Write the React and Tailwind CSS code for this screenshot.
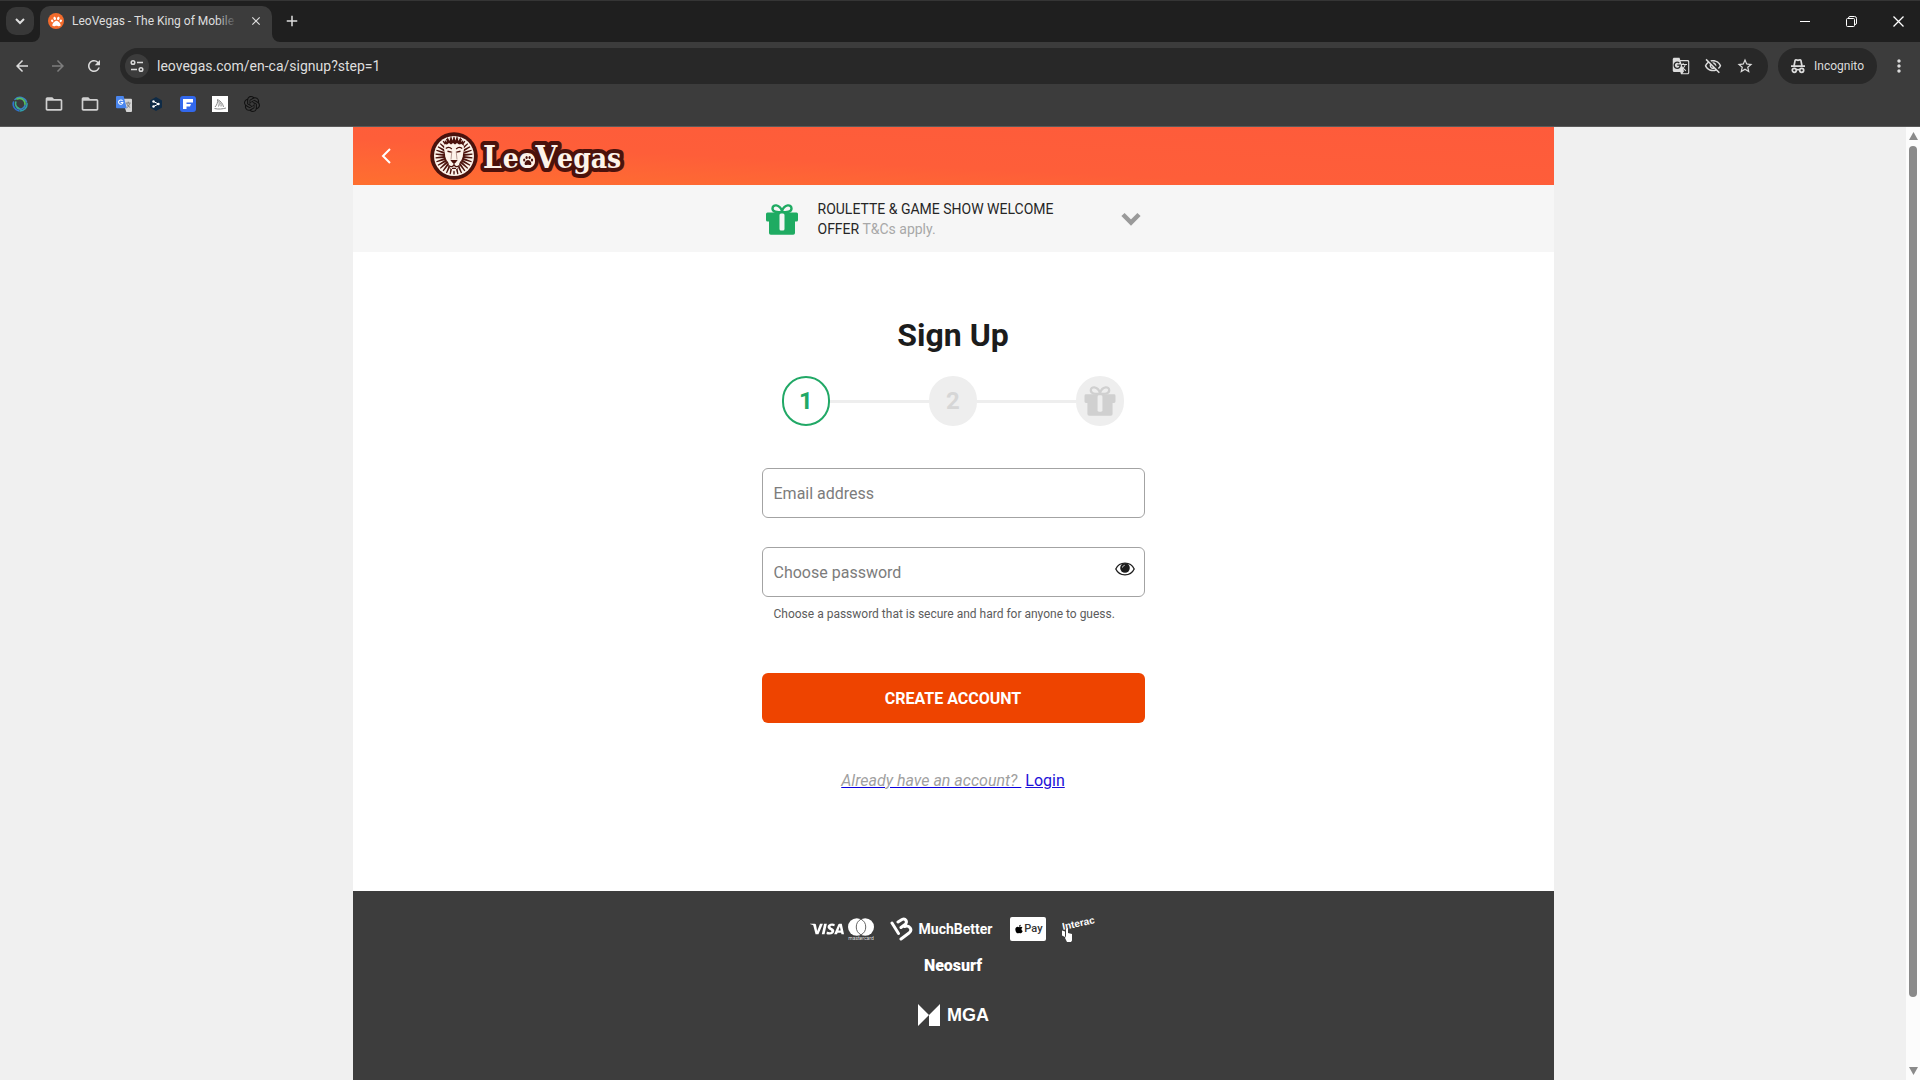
import React, { useState } from 'react';
import {
  MdArrowBack,
  MdArrowForward,
  MdRefresh,
  MdStarBorder,
  MdOutlineVisibilityOff,
  MdMoreVert,
  MdFolderOpen,
  MdGTranslate,
  MdClose,
  MdAdd,
} from 'react-icons/md';
import { FaApple, FaPaw } from 'react-icons/fa';
import { SiVisa, SiOpenai } from 'react-icons/si';

const RAYS = Array.from({ length: 30 }, (_, i) => i * 12);

function GiftIcon({ className, ribbon }) {
  return (
    <svg viewBox="0 0 32 31" className={className} aria-hidden="true">
      <path
        d="M15.5 8C11 8.500 6.500 8 6.500 4.500C6.500 0 13.500 0 16 7C18.500 0 25.500 0 25.500 4.500C25.500 8 21 8.500 16.500 8"
        fill="none"
        stroke="currentColor"
        strokeWidth="2.400"
      />
      <path d="M1.500 8.500h29a1.500 1.500 0 0 1 1.500 1.500v6a1.500 1.500 0 0 1-1.500 1.500H29V29a1.800 1.800 0 0 1-1.800 1.800H4.800A1.800 1.800 0 0 1 3 29V17.500H1.500A1.500 1.500 0 0 1 0 16v-6a1.500 1.500 0 0 1 1.500-1.500z" fill="currentColor" />
      <rect x="13.500" y="9.500" width="5" height="17" rx="1.500" fill={ribbon} />
    </svg>
  );
}

function LeoLogo() {
  return (
    <svg viewBox="0 0 200 54" className="h-[54px] w-[200px]" role="img" aria-label="LeoVegas">
      <circle cx="24" cy="27" r="23.800" fill="#4b120c" />
      <circle cx="24" cy="27" r="20" fill="#fdf3ea" />
      <g fill="#4b120c">
        {RAYS.map((a) => (
          <path key={a} d="M22.900 18.500h2.200l-.5-10h-1.200z" transform={`rotate(${a} 24 27)`} />
        ))}
      </g>
      <path d="M14.500 15l3-5 3.500-1 3 .5 3-.5 3.500 1 3 5 .5 5-1.500 8-2.500 4-1.500 6-4.500 4.500-4.500-4.500-1.500-6-2.500-4-1.500-8z" fill="#fdf3ea" />
      <path d="M14 17l1-6 1.500 2 1-5 2 4 1.500-5.500 1.500 5L24 7l1.500 4.500 1.500-5 1.500 5.500 2-4 1 5 1.500-2 1 6-2.500-2-2.500.5-2-1.500-2 1.500-2-1.500-2 1.500-2-1.500-2 1.500-2.500-.5z" fill="#4b120c" />
      <path d="M15.800 19.500c2-1.700 4.400-1.300 6 .5M32.200 19.500c-2-1.700-4.400-1.300-6 .5" fill="none" stroke="#4b120c" strokeWidth="1.200" />
      <path d="M17.500 22.300l4 .8M30.500 22.300l-4 .8" fill="none" stroke="#4b120c" strokeWidth="1.400" />
      <path d="M21.800 22.500l-.8 8M26.200 22.500l.8 8" fill="none" stroke="#4b120c" strokeWidth=".4" />
      <path d="M20.300 31h7.400l-2.400 3h-2.600z" fill="#4b120c" />
      <path d="M24 33.500v3.200M18.500 36.500c2.200 1.800 4.200 1.300 5.500-.3c1.300 1.600 3.300 2.100 5.500.3M22 39.300h4" fill="none" stroke="#4b120c" strokeWidth="1.300" />
      <text
        x="53"
        y="39"
        fill="#fdf3ea"
        stroke="#4b120c"
        strokeWidth="8"
        strokeLinejoin="round"
        paintOrder="stroke"
        fontWeight="700"
        fontSize="28"
        fontFamily='"DejaVu Serif Condensed", "DejaVu Serif", serif'
      >
        <tspan fontSize="31">L</tspan>eo<tspan fontSize="31">V</tspan>egas
      </text>
      <circle cx="98" cy="32" r="7" fill="#fdf3ea" />
      <g fill="#4b120c">
        <path d="M98 31c2 0 4 3 3.200 4.500c-.7 1.200-2 .3-3.200.3s-2.500.9-3.200-.3C94 34 96 31 98 31z" />
        <ellipse cx="94.200" cy="31" rx="1.100" ry="1.500" />
        <ellipse cx="96.600" cy="28.500" rx="1.100" ry="1.600" />
        <ellipse cx="99.600" cy="28.500" rx="1.100" ry="1.600" />
        <ellipse cx="102" cy="31" rx="1.100" ry="1.500" />
      </g>
    </svg>
  );
}

function TabStrip() {
  return (
    <div className="flex h-[42px] items-end border-t border-[#353535] bg-[#1f1f1f] text-[#dedede]">
      <button className="mb-[7px] ml-[6px] flex size-7 items-center justify-center rounded-[10px] bg-[#383838]" aria-label="Search tabs">
        <svg viewBox="0 0 10 10" className="size-[10px]" fill="none" stroke="currentColor" strokeWidth="2">
          <path d="M1 3l4 4 4-4" />
        </svg>
      </button>
      <div className="relative ml-[6px] flex h-9 w-[232px] items-center rounded-t-[10px] bg-[#3c3c3c] pr-[9px] pb-[6px] pl-2">
        <svg viewBox="0 0 8 8" className="absolute bottom-0 -left-2 size-2" fill="#3c3c3c">
          <path d="M8 0v8H0a8 8 0 0 0 8-8z" />
        </svg>
        <svg viewBox="0 0 8 8" className="absolute -right-2 bottom-0 size-2" fill="#3c3c3c">
          <path d="M0 0v8h8a8 8 0 0 1-8-8z" />
        </svg>
        <span className="flex size-4 items-center justify-center rounded-full bg-[#f36b2c] text-white">
          <FaPaw className="size-[11px]" />
        </span>
        <span className="relative ml-2 flex-1 text-[12px] whitespace-nowrap">
          LeoVegas - The King of Mobile
          <span className="absolute inset-y-0 right-0 w-5 bg-linear-to-r from-transparent to-[#3c3c3c]" />
        </span>
        <button className="ml-3" aria-label="Close tab">
          <MdClose className="size-[14px]" />
        </button>
      </div>
      <button className="mb-[12px] ml-[11px]" aria-label="New tab">
        <MdAdd className="size-[18px]" />
      </button>
      <div className="mb-[15px] ml-auto flex items-center gap-9 pr-4 text-white">
        <button aria-label="Minimize">
          <svg viewBox="0 0 10 10" className="size-[10px]" stroke="currentColor">
            <path d="M0 4.500h10" />
          </svg>
        </button>
        <button aria-label="Restore">
          <svg viewBox="0 0 11 11" className="size-[11px]" fill="none" stroke="currentColor">
            <rect x=".5" y="2.500" width="8" height="8" rx="1" />
            <path d="M2.500 2.500V2A1.500 1.500 0 0 1 4 .5h4.500a2 2 0 0 1 2 2V7A1.500 1.500 0 0 1 9 8.500" />
          </svg>
        </button>
        <button aria-label="Close">
          <svg viewBox="0 0 11 11" className="size-[11px]" stroke="currentColor" strokeWidth="1.300">
            <path d="M.5.5l10 10M10.500.5l-10 10" />
          </svg>
        </button>
      </div>
    </div>
  );
}

function Toolbar() {
  return (
    <div className="flex h-12 items-center bg-[#3c3c3c] pr-[11px] pl-[13px] text-[#dcdcdc]">
      <div className="flex items-center gap-[18px]">
        <button aria-label="Back"><MdArrowBack className="size-[18px]" /></button>
        <button className="text-[#7d7d7d]" aria-label="Forward"><MdArrowForward className="size-[18px]" /></button>
        <button aria-label="Reload"><MdRefresh className="size-[18px]" /></button>
      </div>
      <div className="ml-[17px] flex h-9 flex-1 items-center rounded-full bg-[#282828] pr-[14px] pl-[5px]">
        <button className="flex size-6 items-center justify-center rounded-full bg-[#3c3c3c]" aria-label="Site information">
          <svg viewBox="0 0 14 14" className="size-[14px]" fill="none" stroke="currentColor" strokeWidth="1.500">
            <circle cx="3" cy="3.500" r="1.800" />
            <path d="M7 3.500h6M1 10.500h6" />
            <circle cx="11" cy="10.500" r="1.800" />
          </svg>
        </button>
        <input
          className="ml-2 flex-1 bg-transparent text-[14px] text-[#dedede] outline-none"
          aria-label="Address"
          defaultValue="leovegas.com/en-ca/signup?step=1"
        />
        <div className="flex items-center gap-[14px]">
          <button aria-label="Translate"><MdGTranslate className="size-[18px]" /></button>
          <button aria-label="Cookies blocked"><MdOutlineVisibilityOff className="size-[18px]" /></button>
          <button aria-label="Bookmark"><MdStarBorder className="size-[18px]" /></button>
        </div>
      </div>
      <button className="ml-[10px] flex h-9 items-center gap-2 rounded-full bg-[#282828] pr-[13px] pl-3 text-[12px]">
        <svg viewBox="0 0 16 16" className="size-4" fill="none" stroke="currentColor" strokeWidth="1.700">
          <path d="M1 8.200h14M4 8l1-5.200c.2-.9.700-1.100 1.400-.9l1.600.4 1.600-.4c.7-.2 1.200 0 1.400.9L12 8" />
          <circle cx="4.300" cy="12.300" r="2" />
          <circle cx="11.700" cy="12.300" r="2" />
          <path d="M6.300 12c1-.6 2.400-.6 3.400 0" />
        </svg>
        Incognito
      </button>
      <button className="ml-3" aria-label="Menu"><MdMoreVert className="size-5" /></button>
    </div>
  );
}

function BookmarksBar() {
  return (
    <div className="flex h-[37px] items-center gap-4 border-b border-[#5a5a5a] bg-[#3c3c3c] px-3 pb-2 text-[#d0d0d0]">
      <a href="#swirl" aria-label="Swirl">
        <svg viewBox="0 0 16 16" className="size-4" fill="none" strokeWidth="1.600" strokeLinecap="round">
          <path d="M3 3.500A7 7 0 0 1 14.500 6" stroke="#3b82c4" />
          <path d="M5 3A5.500 5.500 0 0 1 13 8.500" stroke="#55c060" />
          <path d="M15 7.500A7 7 0 0 1 8 15" stroke="#2f9fae" />
          <path d="M13 9.500A5 5 0 0 1 5 12" stroke="#3b82c4" />
          <path d="M6.500 14.800A7 7 0 0 1 1.500 6" stroke="#2f74d0" />
          <path d="M7 12.500A5 5 0 0 1 3.800 6" stroke="#3fb58a" />
        </svg>
      </a>
      <a href="#folder-1" aria-label="Folder 1"><MdFolderOpen className="size-5" /></a>
      <a href="#folder-2" aria-label="Folder 2"><MdFolderOpen className="size-5" /></a>
      <a href="#translate" aria-label="Translate">
        <svg viewBox="0 0 17 17" className="size-4">
          <path d="M6 3h10a1 1 0 0 1 1 1v12a1 1 0 0 1-1 1h-5z" fill="#d5d5d5" />
          <path d="M1 0h7l3.500 13H1a1 1 0 0 1-1-1V1a1 1 0 0 1 1-1z" fill="#4a86ee" />
          <path d="M7 5.300A2.300 2.300 0 1 0 7.300 7H5" fill="none" stroke="#fff" strokeWidth="1.100" />
          <path d="M10.500 7.500h5M13 6v1.500M11.500 8c.5 2 2 3.500 3.500 4M14.500 8c-.5 2-1.500 3.500-3 4.500" fill="none" stroke="#777" />
        </svg>
      </a>
      <a href="#deepl" aria-label="Hexagon">
        <svg viewBox="0 0 16 16" className="size-4">
          <path d="M8 1l6 3.500v7L8 15l-6-3.500v-7z" fill="#0f2b46" />
          <path d="M5.500 5.500L10.500 8l-5 2.500" fill="none" stroke="#fff" />
          <circle cx="5.500" cy="5.500" r="1.200" fill="#fff" />
          <circle cx="10.500" cy="8" r="1.200" fill="#fff" />
          <circle cx="5.500" cy="10.500" r="1.200" fill="#fff" />
        </svg>
      </a>
      <a href="#flag" aria-label="Flag">
        <svg viewBox="0 0 16 16" className="size-4">
          <rect width="16" height="16" rx="3" fill="#3268ec" />
          <path d="M3 3h10v3.500H6.500V8H11l-1 2.500H6.500V13H3z" fill="#fff" />
        </svg>
      </a>
      <a href="#sail" aria-label="Sailboat">
        <svg viewBox="0 0 16 16" className="size-4">
          <rect width="16" height="16" fill="#fff" />
          <path d="M3 11C5 9 6 6 5.500 3.500C9 5 11 8 11.500 11M6.500 10.500c1-2 .8-4 .3-5.500M9 10.500c.3-1 .2-2.500-.4-4M2.500 12.500c4 1 8 .5 11.500-.5" fill="none" stroke="#888" />
        </svg>
      </a>
      <a href="#chat" aria-label="Chat" className="text-[#111]"><SiOpenai className="size-4" /></a>
    </div>
  );
}

function Steps() {
  return (
    <ol className="mx-auto mt-[21px] flex max-w-[342px] items-center text-[24px] font-bold">
      <li className="flex h-[50px] w-12 items-center justify-center rounded-full border-2 border-[#21a866] text-[#21a866]">1</li>
      <li className="h-[3px] flex-1 bg-[#eeeeee]" aria-hidden="true" />
      <li className="flex h-[50px] w-12 items-center justify-center rounded-full bg-[#eeeeee] text-[#d6d6d6]">2</li>
      <li className="h-[3px] flex-1 bg-[#eeeeee]" aria-hidden="true" />
      <li className="flex h-[50px] w-12 items-center justify-center rounded-full bg-[#eeeeee] text-[#d0d0d0]">
        <GiftIcon className="h-[30px] w-8" ribbon="#eeeeee" />
      </li>
    </ol>
  );
}

function Field({ id, label, type, children }) {
  const [value, setValue] = useState('');

  return (
    <div className="relative">
      <input
        id={id}
        type={type}
        value={value}
        onChange={(e) => setValue(e.target.value)}
        className="block h-[50px] w-full rounded-md border border-[#a3a3a3] bg-white px-3 pt-[2px] text-[16px] outline-none"
      />
      {!value && (
        <label htmlFor={id} className="absolute inset-y-0 left-3 flex items-center pt-[2px] text-[16px] text-[#7c7c7c]">
          {label}
        </label>
      )}
      {children}
    </div>
  );
}

function SignUpForm() {
  const [showPassword, setShowPassword] = useState(false);

  return (
    <form className="mx-auto mt-[42px] max-w-[383px]" onSubmit={(e) => e.preventDefault()}>
      <div className="space-y-[29px]">
        <Field id="email" label="Email address" type="email" />
        <Field id="password" label="Choose password" type={showPassword ? 'text' : 'password'}>
          <button
            type="button"
            className="absolute top-3 right-[10px] text-[#1c1c1c]"
            aria-label="Show password"
            onClick={() => setShowPassword(!showPassword)}
          >
            <svg viewBox="0 0 20 20" className="size-5">
              <path d="M.8 10C4.500 2.200 15.500 2.200 19.200 10C15.500 17.800 4.500 17.800 .8 10z" fill="#fff" stroke="currentColor" strokeWidth="1.300" />
              <circle cx="10" cy="9" r="4.800" fill="currentColor" />
              <path d="M7.500 8.500c.2-1.200 1-2 2.200-2.200" fill="none" stroke="#fff" strokeWidth=".8" />
            </svg>
          </button>
        </Field>
      </div>
      <p className="mt-[9px] px-3 text-[12px] leading-4 text-[#5c5c5c]">
        Choose a password that is secure and hard for anyone to guess.
      </p>
      <button type="submit" className="mt-[51px] h-[50px] w-full rounded-md bg-[#ee4400] pt-[2px] text-[16px] font-bold text-white">
        CREATE ACCOUNT
      </button>
      <p className="mt-[46px] text-center text-[16px] leading-6">
        <a href="#login" className="text-[#0b00e0] underline">
          <em className="text-[#a0a0a0]">Already have an account?&nbsp;</em>
        </a>{' '}
        <a href="#login" className="text-[#1b10d8] underline">Login</a>
      </p>
    </form>
  );
}

function Footer() {
  return (
    <footer className="flex flex-1 flex-col items-center bg-[#3d3d3d] pt-[22px] text-white">
      <ul className="flex h-8 items-center">
        <li><SiVisa className="size-[34px]" aria-label="Visa" /></li>
        <li className="ml-1">
          <svg viewBox="0 0 26 24" className="h-6 w-[26px]">
            <circle cx="8.800" cy="10" r="8.800" fill="#fff" />
            <circle cx="17.200" cy="10" r="8.800" fill="#fff" />
            <path d="M13 2.200a8.800 8.800 0 0 1 0 15.600a8.800 8.800 0 0 1 0-15.600z" fill="#fff" stroke="#3d3d3d" strokeWidth=".8" />
            <text x="13" y="23" textAnchor="middle" fontSize="5" fill="#ddd" fontFamily="Roboto, sans-serif">mastercard</text>
          </svg>
        </li>
        <li className="ml-4 flex items-center gap-[6px] text-[14px] font-bold">
          <svg viewBox="0 0 23 24" className="h-6 w-[23px]" fill="none" stroke="#fff" strokeWidth="3" strokeLinecap="round" strokeLinejoin="round">
            <path d="M2 6l6.500 10.500M8 5l4-2.500c3.500-1.800 6 2.500 3 5l-4 3M14.500 9.500c5-2 8.500 3.500 4.500 6.500l-8 6" />
          </svg>
          MuchBetter
        </li>
        <li className="ml-[18px] flex h-6 w-9 items-center justify-center rounded-xs bg-white text-[11px] font-medium text-[#333]">
          <FaApple className="size-[10px] text-black" />
          Pay
        </li>
        <li className="ml-4">
          <svg viewBox="0 0 34 28" className="h-7 w-[34px]">
            <text x="1" y="15" transform="rotate(-12 1 15)" fontSize="10" fontWeight="700" fill="#fff" fontFamily='"Liberation Sans", sans-serif'>
              Interac
            </text>
            <path d="M0 15.500l3 1v5.500l-3-1.500zM4 14l2-1v5l4 1v6.500l-1 1.500H5l-2-4 1-2z" fill="#fff" />
          </svg>
        </li>
      </ul>
      <p className="mt-[9px] text-[16px] leading-6 font-black">Neosurf</p>
      <p className="mt-[25px] flex items-center gap-[6px] font-['Liberation_Sans',sans-serif] text-[18px] leading-6 font-bold">
        <svg viewBox="0 0 24 24" className="size-6" fill="#fff">
          <path d="M1 1l11 11L1 23zM23 1v22H12V12z" />
        </svg>
        MGA
      </p>
    </footer>
  );
}

function SitePage() {
  return (
    <div className="mx-auto flex w-full max-w-[1201px] flex-col bg-white font-[Roboto,sans-serif]">
      <header className="flex h-[58px] items-center bg-linear-to-tr from-[#fe6f2f] via-[#fe5e39] via-40% to-[#fe5b3b] pl-[27px]">
        <button aria-label="Back">
          <svg viewBox="0 0 12 18" className="h-[18px] w-3" fill="none" stroke="#fff" strokeWidth="2">
            <path d="M10 2L3 9l7 7" />
          </svg>
        </button>
        <a href="#home" className="ml-[38px]"><LeoLogo /></a>
      </header>
      <section className="bg-[#f6f6f6] pt-[14px] pb-[13px]">
        <div className="mx-auto flex max-w-[383px] items-center px-1">
          <GiftIcon className="h-[31px] w-8 text-[#1fab62]" ribbon="#f6f6f6" />
          <p className="ml-5 w-[260px] text-[14px] leading-5 text-[#262626]">
            <span className="block">ROULETTE &amp; GAME SHOW WELCOME</span>
            OFFER <span className="text-[#a8a8a8]">T&amp;Cs apply.</span>
          </p>
          <button className="ml-auto" aria-label="Show offer">
            <svg viewBox="0 0 20 14" className="h-[14px] w-5" fill="none" stroke="#9a9a9a" strokeWidth="4.500">
              <path d="M2 2.500l8 8 8-8" />
            </svg>
          </button>
        </div>
      </section>
      <main className="px-4 pt-[63px] pb-[98px]">
        <h1 className="text-center text-[32px] leading-10 font-bold text-[#1c1c1c]">Sign Up</h1>
        <Steps />
        <SignUpForm />
      </main>
      <Footer />
    </div>
  );
}

function App() {
  return (
    <div className="flex min-h-screen flex-col bg-[#f0f0f0] font-[Roboto,sans-serif]">
      <TabStrip />
      <Toolbar />
      <BookmarksBar />
      <div className="flex flex-1">
        <SitePage />
        <div className="flex w-[14px] flex-col items-center bg-[#fcfcfc] py-[5px]" aria-hidden="true">
          <svg viewBox="0 0 9 8" className="h-2 w-[9px]" fill="#8a8a8a"><path d="M4.500 0L9 8H0z" /></svg>
          <div className="mt-[6px] mb-[70px] w-2 flex-1 rounded-full bg-[#8a8a8a]" />
          <svg viewBox="0 0 9 8" className="h-2 w-[9px]" fill="#8a8a8a"><path d="M4.500 8L9 0H0z" /></svg>
        </div>
      </div>
    </div>
  );
}

export default App;
